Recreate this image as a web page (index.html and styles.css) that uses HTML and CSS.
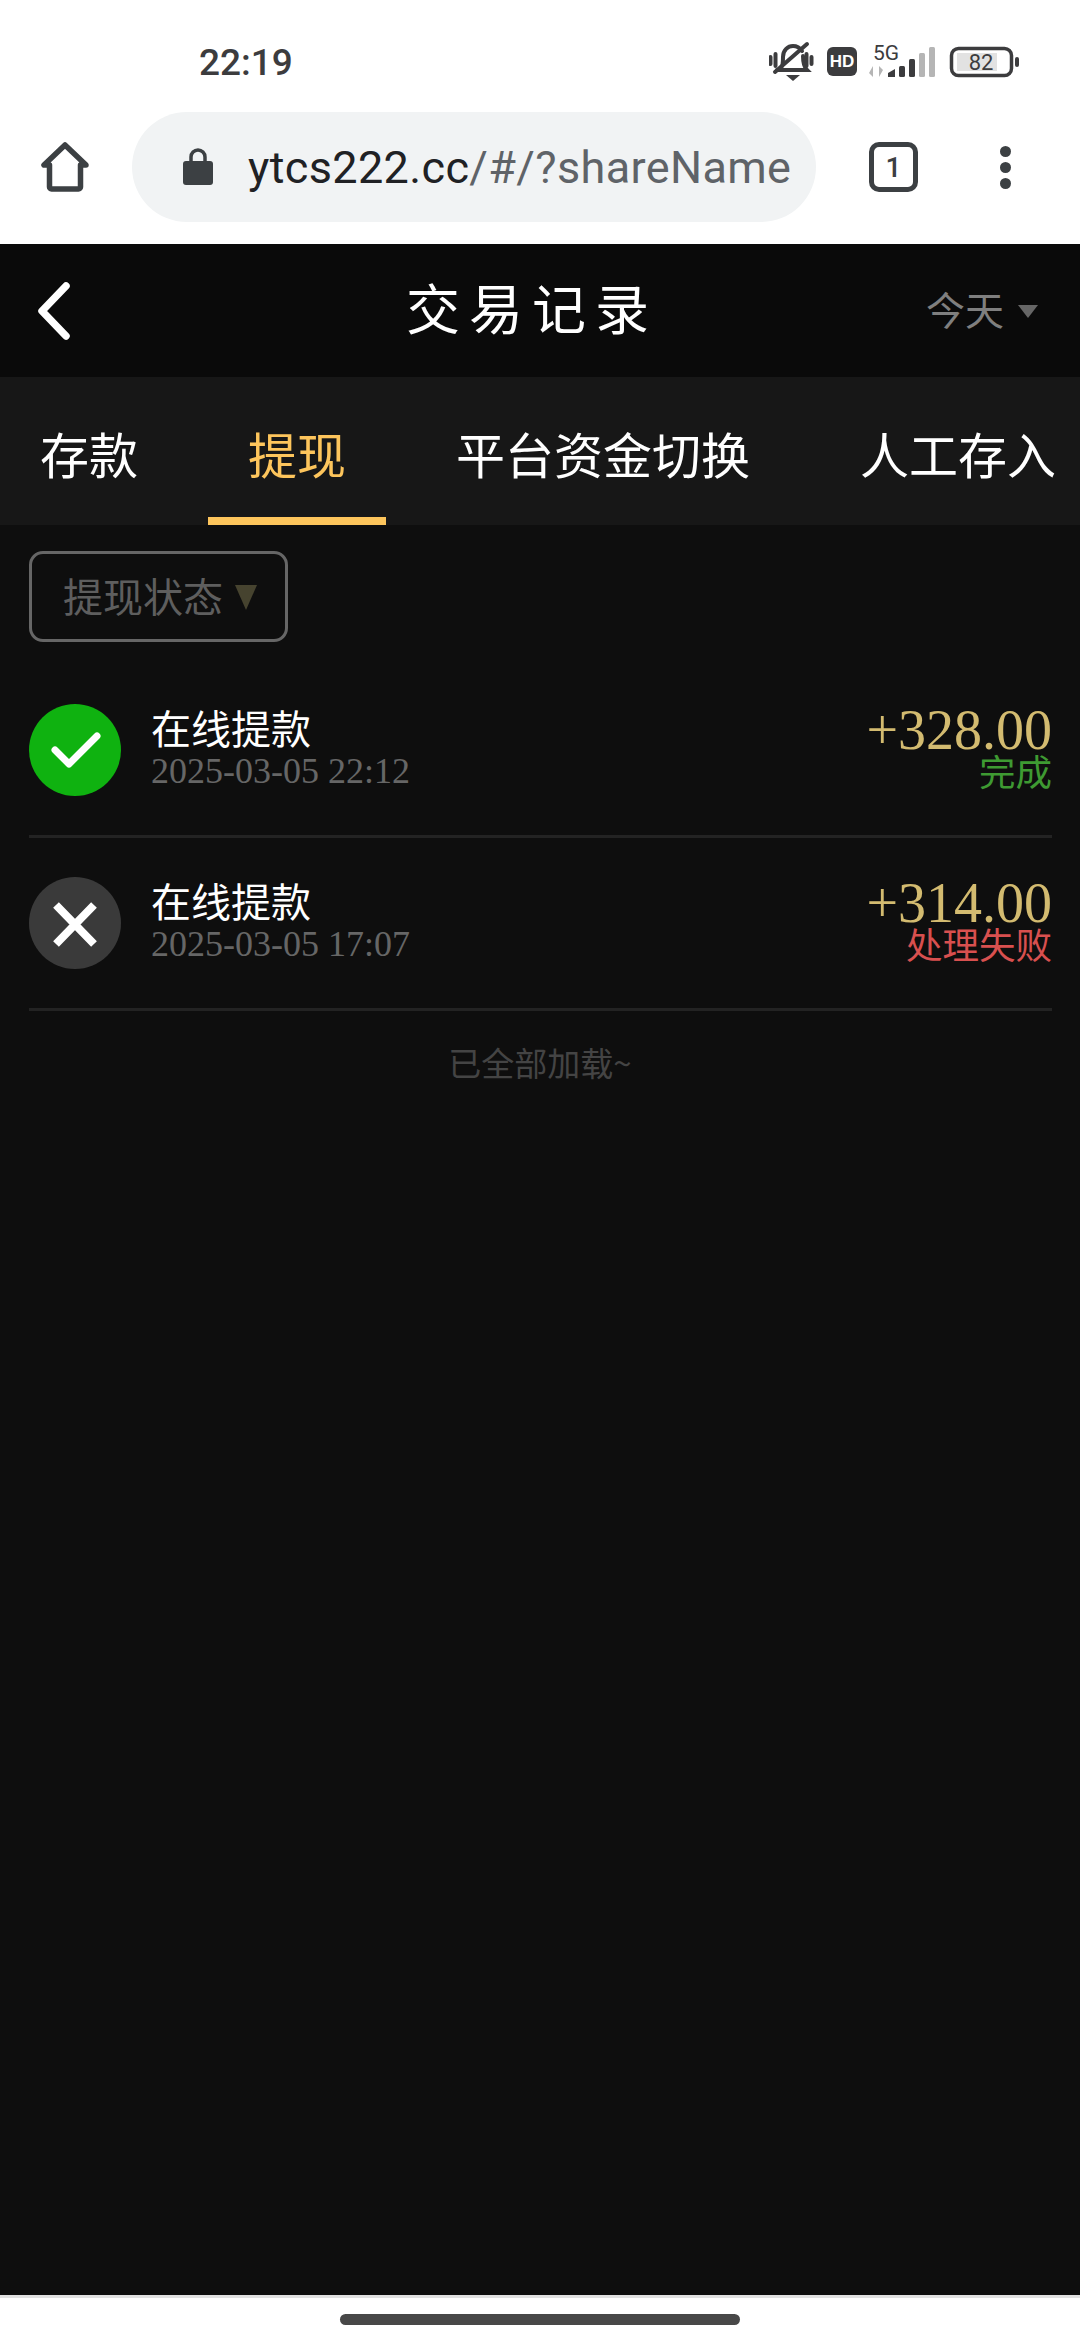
FILE: index.html
```html
<!DOCTYPE html>
<html lang="zh-CN">

<head>
  <meta charset="UTF-8">
  <meta name="viewport" content="width=device-width, initial-scale=1.0">
  <title>交易记录</title>
  <link rel="stylesheet" href="styles.css">
</head>

<body>
  <div class="status-bar">
    <span class="clock">22:19</span>
    <svg class="status-icons" width="252" height="44" viewBox="768 40 252 44">
      <!-- silent bell -->
      <g fill="none" stroke="#3c3c3e" stroke-width="4" stroke-linecap="round">
        <path d="M778 70c4-3 4-7 4-13 0-7 5-11 10-11 4 0 7 2 9 5"></path>
        <path d="M802 56c0 6 1 11 4 14H776"></path>
        <path d="M774 72 806 44"></path>
        <path d="M769.500 57v7M774.500 54v12M805.500 54v12M810.500 57v7"></path>
      </g>
      <path d="M785 75h14l-7 6z" fill="#3c3c3e"></path>
      <!-- HD -->
      <rect x="826" y="47" width="30" height="29" rx="6" fill="#3c3c3e"></rect>
      <text x="841" y="67" class="hd-text" text-anchor="middle">HD</text>
      <!-- 5G + signal -->
      <text x="872" y="60" class="net-text">5G</text>
      <path d="M872 66v11l-4-4zM878 77V66l4 4z" fill="#b5b5b5"></path>
      <path d="M887 73l7-4v8h-7z" fill="#3c3c3e"></path>
      <rect x="898" y="66" width="6" height="11" rx="1.500" fill="#3c3c3e"></rect>
      <rect x="908" y="59" width="6" height="18" rx="1.500" fill="#3c3c3e"></rect>
      <rect x="918" y="53" width="6" height="24" rx="1.500" fill="#b5b5b5"></rect>
      <rect x="928" y="47" width="6" height="30" rx="1.500" fill="#b5b5b5"></rect>
      <!-- battery -->
      <rect x="950.500" y="48.500" width="60" height="27" rx="7" fill="none" stroke="#3c3c3e" stroke-width="3.500"></rect>
      <rect x="956" y="53" width="40" height="18" fill="#e2e2e2"></rect>
      <rect x="1014" y="57" width="4" height="10" rx="2" fill="#3c3c3e"></rect>
      <text x="980" y="70" class="batt-text" text-anchor="middle">82</text>
    </svg>
  </div>

  <div class="browser-bar">
    <svg class="home-icon" width="50" height="52" viewBox="0 0 50 52">
      <path d="M25 4 4 24h5.500v22a2 2 0 0 0 2 2h27a2 2 0 0 0 2-2V24H46z" fill="none" stroke="#3c4043" stroke-width="5.500" stroke-linejoin="round"></path>
    </svg>
    <div class="address">
      <svg class="lock-icon" width="30" height="38" viewBox="0 0 30 38">
        <path d="M8 15V10a7 7 0 0 1 14 0v5" fill="none" stroke="#3c4043" stroke-width="3.500"></path>
        <rect x="0" y="14" width="30" height="24" rx="3" fill="#3c4043"></rect>
      </svg>
      <span class="url"><b>ytcs222.cc</b>/#/?shareName</span>
    </div>
    <div class="tab-count">1</div>
    <div class="menu-dots"><i></i><i></i><i></i></div>
  </div>

  <div class="page">
    <div class="header">
      <svg class="back" width="35" height="58" viewBox="0 0 35 58">
        <path d="M30 4 6 29l24 25" fill="none" stroke="#fff" stroke-width="7.500" stroke-linecap="round" stroke-linejoin="round"></path>
      </svg>
      <h1>交易记录</h1>
      <div class="date-filter">今天<span class="arrow"></span></div>
    </div>

    <div class="tabs">
      <div class="tab">存款</div>
      <div class="tab active">提现</div>
      <div class="tab">平台资金切换</div>
      <div class="tab">人工存入</div>
    </div>

    <div class="filter-wrap">
      <div class="filter">提现状态<span class="filter-arrow"></span></div>
    </div>

    <div class="list">
      <div class="row">
        <div class="state ok">
          <svg width="92" height="92" viewBox="0 0 92 92">
            <path d="M26 46 40 60 68 32" fill="none" stroke="#fff" stroke-width="7" stroke-linecap="round" stroke-linejoin="round"></path>
          </svg>
        </div>
        <div class="info">
          <div class="name">在线提款</div>
          <div class="time">2025-03-05 22:12</div>
        </div>
        <div class="money">
          <div class="amount">+328.00</div>
          <div class="result done">完成</div>
        </div>
      </div>

      <div class="row">
        <div class="state fail">
          <svg width="92" height="92" viewBox="0 0 92 92">
            <path d="M27 28 65 67M65 28 27 67" fill="none" stroke="#fff" stroke-width="8"></path>
          </svg>
        </div>
        <div class="info">
          <div class="name">在线提款</div>
          <div class="time">2025-03-05 17:07</div>
        </div>
        <div class="money">
          <div class="amount">+314.00</div>
          <div class="result failed">处理失败</div>
        </div>
      </div>
    </div>

    <div class="all-loaded">已全部加载~</div>
  </div>

  <div class="nav-bar">
    <div class="nav-pill"></div>
  </div>
</body>

</html>
```

FILE: styles.css
```css
html,
body {
  margin: 0;
  height: 100%;
}

body {
  display: flex;
  flex-direction: column;
  height: 2340px;
  overflow: hidden;
  background-color: #fff;
  font-family: "Noto Sans CJK SC", "Noto Sans", sans-serif;
}

.status-bar {
  display: flex;
  align-items: center;
  justify-content: space-between;
  height: 112px;
  padding: 0 60px 0 199px;
  box-sizing: border-box;
}

.clock {
  font-family: Roboto, sans-serif;
  font-size: 37px;
  font-weight: 500;
  color: #3c3c3e;
  margin-top: 12px;
}

.status-icons {
  display: block;
  margin-top: 12px;
  margin-right: -1px;
}

.hd-text {
  font-family: "Liberation Sans", sans-serif;
  font-size: 17px;
  font-weight: bold;
  fill: #fff;
}

.net-text {
  font-family: Roboto, sans-serif;
  font-size: 21px;
  fill: #3c3c3e;
}

.batt-text {
  font-family: Roboto, sans-serif;
  font-size: 22px;
  fill: #3c3c3e;
}

.browser-bar {
  display: flex;
  align-items: center;
  height: 132px;
  padding-bottom: 22px;
  box-sizing: border-box;
  padding-left: 40px;
}

.home-icon {
  display: block;
}

.address {
  display: flex;
  align-items: center;
  width: 684px;
  height: 110px;
  margin-left: 42px;
  padding-left: 51px;
  box-sizing: border-box;
  border-radius: 55px;
  background-color: #f1f3f4;
}

.lock-icon {
  display: block;
  margin-top: -2px;
}

.url {
  margin-left: 35px;
  font-family: Roboto, sans-serif;
  font-size: 45px;
  letter-spacing: 0.37px;
  color: #5f6368;
  white-space: nowrap;
}

.url b {
  font-weight: 400;
  color: #202124;
}

.tab-count {
  display: flex;
  align-items: center;
  justify-content: center;
  width: 49px;
  height: 50px;
  margin-left: 53px;
  box-sizing: border-box;
  border: 5px solid #3c4043;
  border-radius: 10px;
  font-family: Roboto, sans-serif;
  font-size: 28px;
  font-weight: 500;
  color: #3c4043;
}

.menu-dots {
  display: flex;
  flex-direction: column;
  gap: 5px;
  margin-left: 82px;
}

.menu-dots i {
  display: block;
  width: 11px;
  height: 11px;
  border-radius: 50%;
  background-color: #3c4043;
}

.page {
  flex: 1;
  background-color: #0e0e0e;
}

.header {
  display: flex;
  align-items: center;
  height: 133px;
  padding: 0 42px 0 36px;
  background-color: #0a0a0a;
}

.back {
  display: block;
}

h1 {
  margin: 0 0 8px 335px;
  font-size: 54px;
  font-weight: 400;
  letter-spacing: 9px;
  color: #fff;
}

.date-filter {
  display: flex;
  align-items: center;
  margin-left: auto;
  margin-bottom: 6px;
  font-size: 39px;
  color: #7f7f7f;
}

.arrow {
  width: 0;
  height: 0;
  margin-left: 14px;
  margin-top: 8px;
  border-left: 10px solid transparent;
  border-right: 10px solid transparent;
  border-top: 13px solid #666;
}

.tabs {
  display: flex;
  gap: 30px;
  height: 148px;
  background-color: #171717;
  overflow: hidden;
}

.tab {
  flex-shrink: 0;
  height: 148px;
  padding: 0 40px;
  box-sizing: border-box;
  line-height: 152px;
  font-size: 49px;
  color: #fff;
  white-space: nowrap;
}

.tab.active {
  color: #fdc55c;
  box-shadow: inset 0 -8px 0 #fdc55c;
}

.filter-wrap {
  display: flex;
  height: 140px;
  padding: 26px 0 0 29px;
  box-sizing: border-box;
}

.filter {
  display: flex;
  align-items: center;
  width: 259px;
  height: 91px;
  padding: 0 0 4px 31px;
  box-sizing: border-box;
  border: 3px solid #666;
  border-radius: 14px;
  font-size: 40px;
  color: #5e5e5e;
}

.filter-arrow {
  width: 0;
  height: 0;
  margin-left: 12px;
  margin-top: 6px;
  border-left: 11px solid transparent;
  border-right: 11px solid transparent;
  border-top: 25px solid #46432f;
}

.list {
  margin: 0 28px 0 29px;
}

.row {
  display: flex;
  align-items: center;
  height: 173px;
  box-sizing: border-box;
  border-bottom: 3px solid #232323;
}

.state {
  width: 92px;
  height: 92px;
  border-radius: 50%;
}

.state svg {
  display: block;
}

.state.ok {
  background-color: #0fb210;
}

.state.fail {
  background-color: #3a3a3a;
}

.info {
  margin-left: 30px;
  margin-bottom: 8px;
}

.name {
  font-size: 40px;
  line-height: 50px;
  color: #fff;
}

.time {
  font-family: "Liberation Serif", serif;
  font-size: 36px;
  line-height: 38px;
  color: #666;
}

.money {
  margin-left: auto;
  margin-bottom: 2px;
  text-align: right;
}

.amount {
  font-family: "Liberation Serif", serif;
  font-size: 56px;
  line-height: 43px;
  color: #d3bb70;
}

.result {
  font-size: 36.500px;
  line-height: 38px;
}

.result.done {
  color: #3e9a32;
}

.result.failed {
  color: #d8504f;
}

.all-loaded {
  margin-top: 27px;
  text-align: center;
  font-size: 33px;
  color: #444;
}

.nav-bar {
  display: flex;
  justify-content: center;
  height: 45px;
  padding-top: 16px;
  box-sizing: border-box;
  border-top: 3px solid #e0e0e0;
}

.nav-pill {
  width: 400px;
  height: 11px;
  border-radius: 6px;
  background-color: #484848;
}
```
